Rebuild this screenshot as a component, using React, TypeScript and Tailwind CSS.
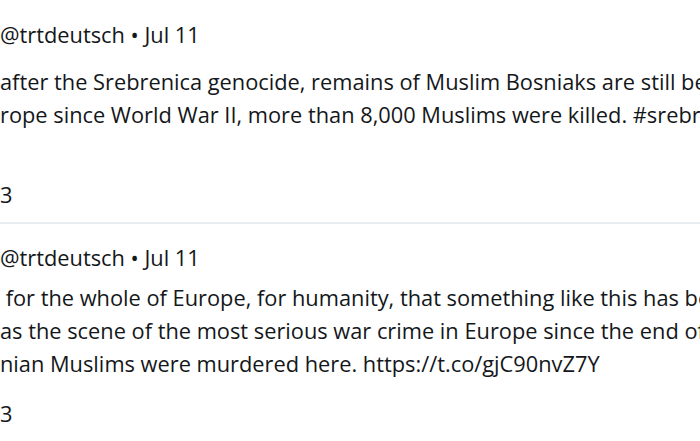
const tweets = [
  {
    lines: [
      "after the Srebrenica genocide, remains of Muslim Bosniaks are still being found. In the worst massacre in",
      "rope since World War II, more than 8,000 Muslims were killed. #srebrenica",
      "",
    ],
    count: "3",
    wrap: "pt-[18px] pb-[11px] border-b-2 border-[#e6ecf0]",
    body: "mt-[14px]",
    foot: "mt-[14px]",
  },
  {
    lines: [
      " for the whole of Europe, for humanity, that something like this has been possible",
      "as the scene of the most serious war crime in Europe since the end of the Second World War",
      "nian Muslims were murdered here. https://t.co/gjC90nvZ7Y",
    ],
    count: "3",
    wrap: "pt-[17px]",
    body: "mt-[7px]",
    foot: "mt-[17px]",
  },
];

const Tweet = ({
  lines,
  count,
  wrap,
  body,
  foot,
}: {
  lines: string[];
  count: string;
  wrap: string;
  body: string;
  foot: string;
}) => (
  <div className={wrap}>
    <div className="h-[33px] leading-[33px] whitespace-nowrap">
      @trtdeutsch • Jul 11
    </div>
    <div className={body}>
      {lines.map((line, i) => (
        <div
          key={i}
          className="h-[33px] leading-[33px] whitespace-pre overflow-hidden"
        >
          {line}
        </div>
      ))}
    </div>
    <div className={`${foot} h-[33px] leading-[33px]`}>{count}</div>
  </div>
);

export default function App() {
  return (
    <div className="h-[441px] w-[700px] overflow-hidden bg-white font-['Open_Sans',sans-serif] text-[21.8px] text-[#14171a]">
      {tweets.map((t, i) => (
        <Tweet key={i} {...t} />
      ))}
    </div>
  );
}
